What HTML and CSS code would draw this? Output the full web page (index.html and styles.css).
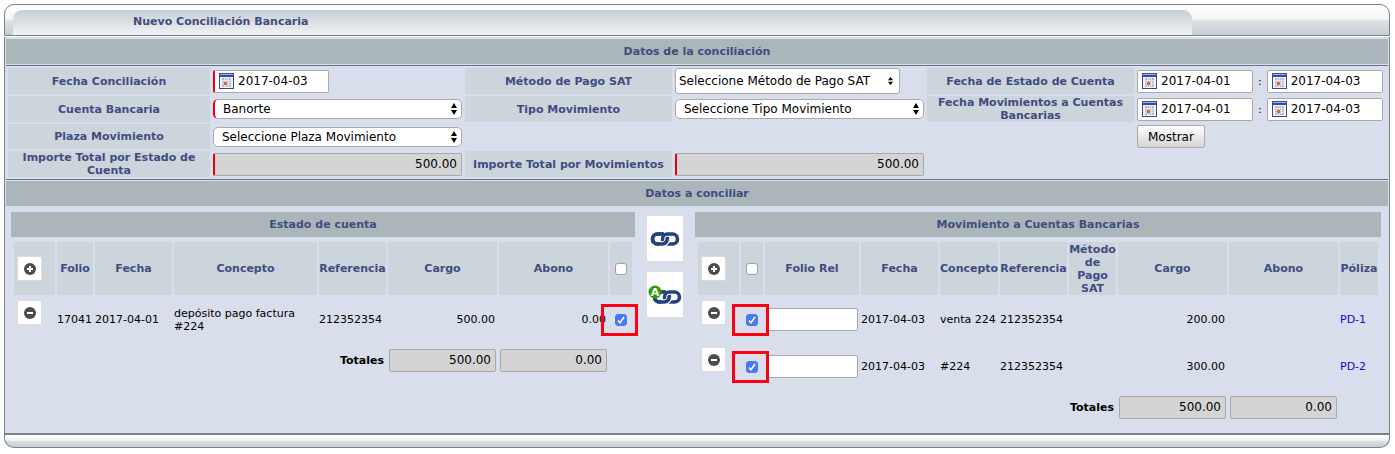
FILE: index.html
```html
<!DOCTYPE html>
<html lang="es">
<head>
  <meta charset="UTF-8">
  <meta name="viewport" content="width=device-width, initial-scale=1.0">
  <title>Nuevo Conciliación Bancaria</title>
  <link rel="stylesheet" href="styles.css">
</head>

<body>

  <!-- Shared icons -->
  <svg class="sprite" aria-hidden="true">
    <symbol id="icon-calendar" viewBox="0 0 15 16">
      <rect x="0.5" y="0.5" width="14" height="15" fill="#f4f4f6" stroke="#38479b"/>
      <rect x="0" y="0" width="15" height="4" fill="#3448a4"/>
      <rect x="1" y="1" width="13" height="1" fill="#9db4ec"/>
      <rect x="3" y="5" width="9" height="9" fill="#b9b9bd"/>
      <path d="M3 7.5h9M3 9.5h9M3 11.5h9M5.5 5v9M7.5 5v9M9.5 5v9" stroke="#ececf0" stroke-width="0.8"/>
      <rect x="5" y="9" width="3" height="3" fill="#c8694a"/>
    </symbol>
    <symbol id="icon-plus" viewBox="0 0 12 12">
      <circle cx="6" cy="6" r="6" fill="#4d4d4d"/>
      <path d="M6 3v6M3 6h6" stroke="#fff" stroke-width="2"/>
    </symbol>
    <symbol id="icon-minus" viewBox="0 0 12 12">
      <circle cx="6" cy="6" r="6" fill="#4d4d4d"/>
      <path d="M3 6h6" stroke="#fff" stroke-width="2"/>
    </symbol>
    <symbol id="icon-link" viewBox="0 0 30 14">
      <g fill="none">
        <rect x="2.5" y="2" width="15" height="10" rx="5" stroke="#26427a" stroke-width="3.6"/>
        <rect x="12.500" y="2" width="15" height="10" rx="5" stroke="#fff" stroke-width="5.6"/>
        <path d="M14 2H7.500a5 5 0 0 0 0 10H10" stroke="#26427a" stroke-width="3.6"/>
        <rect x="12.500" y="2" width="15" height="10" rx="5" stroke="#26427a" stroke-width="3.6"/>
        <path d="M17.500 7a5 5 0 0 1-5 5H9" stroke="#fff" stroke-width="5.6"/>
        <path d="M17 5.500a5 5 0 0 1-4.500 6.500H7.500" stroke="#26427a" stroke-width="3.6"/>
      </g>
    </symbol>
  </svg>

  <div class="panel">
    <header class="panel-top">
      <h1 class="tab">Nuevo Conciliación Bancaria</h1>
    </header>

    <main class="panel-body">
      <h2 class="section-title">Datos de la conciliación</h2>

      <form class="form-grid">
        <label class="field-label" for="fechaConciliacion">Fecha Conciliación</label>
        <div class="field">
          <span class="date-box required"><svg class="calendar"><use href="#icon-calendar"/></svg><input type="text" id="fechaConciliacion" value="2017-04-03"></span>
        </div>
        <label class="field-label" for="metodoPago">Método de Pago SAT</label>
        <div class="field">
          <select class="select-small" id="metodoPago"><option>Seleccione Método de Pago SAT</option></select>
        </div>
        <label class="field-label" for="estadoDesde">Fecha de Estado de Cuenta</label>
        <div class="field range">
          <span class="date-box"><svg class="calendar"><use href="#icon-calendar"/></svg><input type="text" id="estadoDesde" value="2017-04-01"></span>
          <span>:</span>
          <span class="date-box"><svg class="calendar"><use href="#icon-calendar"/></svg><input type="text" aria-label="Fecha de Estado de Cuenta hasta" value="2017-04-03"></span>
        </div>

        <label class="field-label" for="cuentaBancaria">Cuenta Bancaria</label>
        <div class="field">
          <select class="select-wide required" id="cuentaBancaria"><option>Banorte</option></select>
        </div>
        <label class="field-label" for="tipoMovimiento">Tipo Movimiento</label>
        <div class="field">
          <select class="select-wide" id="tipoMovimiento"><option>Seleccione Tipo Movimiento</option></select>
        </div>
        <label class="field-label" for="movDesde">Fecha Movimientos a Cuentas Bancarias</label>
        <div class="field range">
          <span class="date-box"><svg class="calendar"><use href="#icon-calendar"/></svg><input type="text" id="movDesde" value="2017-04-01"></span>
          <span>:</span>
          <span class="date-box"><svg class="calendar"><use href="#icon-calendar"/></svg><input type="text" aria-label="Fecha Movimientos hasta" value="2017-04-03"></span>
        </div>

        <label class="field-label" for="plazaMovimiento">Plaza Movimiento</label>
        <div class="field">
          <select class="select-wide" id="plazaMovimiento"><option>Seleccione Plaza Movimiento</option></select>
        </div>
        <div class="field mostrar">
          <button type="button" class="btn">Mostrar</button>
        </div>

        <label class="field-label" for="totalEstado">Importe Total por Estado de Cuenta</label>
        <div class="field">
          <input type="text" class="amount required" id="totalEstado" value="500.00" readonly>
        </div>
        <label class="field-label" for="totalMovimientos">Importe Total por Movimientos</label>
        <div class="field">
          <input type="text" class="amount required" id="totalMovimientos" value="500.00" readonly>
        </div>
      </form>

      <h2 class="section-title">Datos a conciliar</h2>

      <div class="reconcile">
        <!-- Estado de cuenta -->
        <section>
          <h3 class="table-title">Estado de cuenta</h3>
          <table class="data-table">
            <colgroup>
              <col class="col-toggle"><col class="col-folio"><col class="col-fecha"><col class="col-concepto">
              <col class="col-referencia"><col class="col-importe"><col class="col-importe"><col class="col-check">
            </colgroup>
            <thead>
              <tr>
                <th class="toggle"><button type="button" class="icon-btn" aria-label="Agregar"><svg><use href="#icon-plus"/></svg></button></th>
                <th>Folio</th>
                <th>Fecha</th>
                <th>Concepto</th>
                <th>Referencia</th>
                <th>Cargo</th>
                <th>Abono</th>
                <th><input type="checkbox" aria-label="Seleccionar todo"></th>
              </tr>
            </thead>
            <tbody>
              <tr>
                <td class="toggle"><button type="button" class="icon-btn" aria-label="Quitar"><svg><use href="#icon-minus"/></svg></button></td>
                <td>17041</td>
                <td>2017-04-01</td>
                <td>depósito pago factura #224</td>
                <td>212352354</td>
                <td class="number">500.00</td>
                <td class="number">0.00</td>
                <td class="check"><span class="marked"><input type="checkbox" aria-label="Seleccionar 17041" checked></span></td>
              </tr>
            </tbody>
            <tfoot>
              <tr>
                <td colspan="5" class="total-label">Totales</td>
                <td class="total"><input type="text" class="amount" aria-label="Total cargo" value="500.00" readonly></td>
                <td class="total"><input type="text" class="amount" aria-label="Total abono" value="0.00" readonly></td>
                <td></td>
              </tr>
            </tfoot>
          </table>
        </section>

        <div class="link-buttons">
          <button type="button" class="link-btn" aria-label="Conciliar">
            <svg width="30" height="14"><use href="#icon-link"/></svg>
          </button>
          <button type="button" class="link-btn" aria-label="Conciliar automático">
            <svg width="34" height="20" viewBox="0 0 34 20">
              <svg x="4" y="5" width="30" height="14"><use href="#icon-link"/></svg>
              <circle cx="7" cy="7" r="6.5" fill="#349a0a"/>
              <text class="auto-letter" x="7" y="11" text-anchor="middle">A</text>
            </svg>
          </button>
        </div>

        <!-- Movimientos -->
        <section>
          <h3 class="table-title">Movimiento a Cuentas Bancarias</h3>
          <table class="data-table">
            <colgroup>
              <col class="col-toggle"><col class="col-check"><col class="col-rel"><col class="col-fecha"><col class="col-concepto-short">
              <col class="col-referencia"><col class="col-metodo"><col class="col-importe"><col class="col-importe"><col class="col-poliza">
            </colgroup>
            <thead>
              <tr>
                <th class="toggle"><button type="button" class="icon-btn" aria-label="Agregar"><svg><use href="#icon-plus"/></svg></button></th>
                <th><input type="checkbox" aria-label="Seleccionar todo"></th>
                <th>Folio Rel</th>
                <th>Fecha</th>
                <th>Concepto</th>
                <th>Referencia</th>
                <th>Método de Pago SAT</th>
                <th>Cargo</th>
                <th>Abono</th>
                <th>Póliza</th>
              </tr>
            </thead>
            <tbody>
              <tr>
                <td class="toggle"><button type="button" class="icon-btn" aria-label="Quitar"><svg><use href="#icon-minus"/></svg></button></td>
                <td class="check"><span class="marked"><input type="checkbox" aria-label="Seleccionar venta 224" checked></span></td>
                <td class="rel"><input type="text" class="text-box" aria-label="Folio Rel"></td>
                <td>2017-04-03</td>
                <td>venta 224</td>
                <td>212352354</td>
                <td></td>
                <td class="number">200.00</td>
                <td></td>
                <td><a href="#">PD-1</a></td>
              </tr>
              <tr>
                <td class="toggle"><button type="button" class="icon-btn" aria-label="Quitar"><svg><use href="#icon-minus"/></svg></button></td>
                <td class="check"><span class="marked"><input type="checkbox" aria-label="Seleccionar #224" checked></span></td>
                <td class="rel"><input type="text" class="text-box" aria-label="Folio Rel"></td>
                <td>2017-04-03</td>
                <td>#224</td>
                <td>212352354</td>
                <td></td>
                <td class="number">300.00</td>
                <td></td>
                <td><a href="#">PD-2</a></td>
              </tr>
            </tbody>
            <tfoot>
              <tr>
                <td colspan="7" class="total-label">Totales</td>
                <td class="total"><input type="text" class="amount" aria-label="Total cargo" value="500.00" readonly></td>
                <td class="total"><input type="text" class="amount" aria-label="Total abono" value="0.00" readonly></td>
                <td></td>
              </tr>
            </tfoot>
          </table>
        </section>
      </div>
    </main>

    <footer class="panel-bottom"></footer>
  </div>

</body>

</html>
```

FILE: styles.css
```css
/* General Styles */
*,
*::after {
  box-sizing: border-box;
}

body {
  margin: 4px 5px 0 4px;
  background-color: #fff;
  color: #000;
  font-family: Verdana, "DejaVu Sans", sans-serif;
  font-size: 11px;
  line-height: 13px;
}

h1,
h2,
h3 {
  margin: 0;
  font-size: 11px;
  color: #414c80;
}

input,
select,
button {
  margin: 0;
  font-family: inherit;
  font-size: 12px;
  color: #000;
}

a {
  color: #2200dd;
  text-decoration: none;
}

.sprite {
  display: none;
}

/* Panel */
.panel-top {
  height: 32px;
  padding: 5px 197px 0 8px;
  border: 1px solid #77828c;
  border-radius: 10px 10px 0 0;
  background: linear-gradient(#fff, #f3f4f5 48%, #dce1e5 52%, #c6ced6);
}

.tab {
  height: 25px;
  padding-left: 120px;
  border-radius: 9px 9px 0 0;
  background: linear-gradient(#c6ced6, #f1f2f3);
  line-height: 23px;
}

.panel-body {
  margin-top: 1px;
  padding: 2px 1px 0;
  border: 1px solid #77828c;
  border-top: none;
  background-color: #d8deeb;
}

.panel-bottom {
  height: 13px;
  border: 1px solid #77828c;
  border-top: none;
  border-radius: 0 0 10px 10px;
  background: linear-gradient(#fff, #eff1f2 45%, #d8dde1 55%, #c6ced6);
}

.section-title,
.table-title {
  background-color: #abb6bb;
  line-height: 25px;
  text-align: center;
}

/* Form */
.form-grid {
  display: grid;
  grid-template-columns: 202fr 249fr 207fr 249fr 207fr 249fr;
  grid-template-rows: 26px 26px 25px 26px;
  gap: 2px 3px;
  margin: 1px 0;
  padding: 2px;
  border-top: 1px solid #64748a;
  border-bottom: 1px solid #64748a;
}

.field-label {
  display: flex;
  align-items: center;
  justify-content: center;
  padding: 0 4px;
  background-color: #ccd4dc;
  color: #414c80;
  font-weight: bold;
  text-align: center;
}

.field {
  display: flex;
  align-items: center;
  min-width: 0;
}

.mostrar {
  grid-column: 6;
}

.range {
  gap: 5px;
}

.date-box {
  display: flex;
  align-items: center;
  gap: 4px;
  width: 116px;
  height: 23px;
  padding-left: 4px;
  border: 1px solid #a9a9a9;
  border-radius: 2px;
  background-color: #fff;
}

.date-box input {
  flex: 1;
  min-width: 0;
  padding: 0;
  border: none;
  background: none;
}

.calendar {
  width: 15px;
  height: 16px;
}

select {
  appearance: none;
  border: 1px solid #a9a9a9;
  background: #fff url("data:image/svg+xml,%3Csvg xmlns='http://www.w3.org/2000/svg' width='6' height='12'%3E%3Cpath d='M0 5L3 0l3 5zM0 7l3 5 3-5z'/%3E%3C/svg%3E") no-repeat right 4px center;
}

.select-wide {
  width: 100%;
  height: 20px;
  padding: 0 16px 0 8px;
  border-radius: 5px;
}

.select-small {
  width: 225px;
  height: 26px;
  padding: 0 16px 0 3px;
  border-radius: 3px;
  background-position: right 6px center;
  background-size: 5px 8px;
}

.required {
  border-left: 2px solid #e60010;
}

.amount,
.text-box {
  display: block;
  width: 100%;
  height: 23px;
  padding: 0 4px;
  border: 1px solid #a9a9a9;
  border-radius: 2px;
}

.amount {
  background-color: #d4d4d4;
  text-align: right;
}

.amount.required {
  border-left: 2px solid #e60010;
}

.btn {
  height: 23px;
  padding: 0 10px;
  border: 1px solid #a9a9a9;
  border-radius: 2px;
  background: linear-gradient(#fff, #d4d4d4);
}

/* Reconciliation area */
.reconcile {
  display: grid;
  grid-template-columns: 624fr 38px 686fr;
  gap: 11px;
  padding: 6px 8px 8px 6px;
  border-bottom: 1px solid #77828c;
  margin: 0 -1px;
}

.data-table {
  width: calc(100% - 2px);
  margin: 3px 1px 0;
  border-spacing: 2px;
  table-layout: fixed;
}

.data-table th,
.data-table td {
  padding: 0;
}

.data-table th {
  height: 53px;
  background-color: #ccd4dc;
  color: #414c80;
}

.data-table tbody td {
  height: 45px;
}

.data-table tfoot td {
  height: 32px;
}

.data-table .number {
  padding-right: 2px;
  text-align: right;
}

.data-table .toggle {
  padding-left: 3px;
  text-align: left;
}

.data-table tbody .toggle {
  padding-top: 3px;
  vertical-align: top;
}

.data-table .check {
  text-align: center;
}

.data-table .total,
.data-table .rel {
  padding: 0 1px;
}

.data-table .total-label {
  padding-right: 2px;
  font-weight: bold;
  text-align: right;
}

.col-toggle { width: 41px; }
.col-check { width: 22px; }
.col-folio { width: 36px; }
.col-fecha { width: 77px; }
.col-concepto { width: 143px; }
.col-concepto-short { width: 58px; }
.col-referencia { width: 67px; }
.col-metodo { width: 47px; }
.col-rel { width: 94px; }
.col-importe { width: 109px; }
.col-poliza { width: 38px; }

.icon-btn {
  display: flex;
  align-items: center;
  justify-content: center;
  width: 25px;
  height: 25px;
  padding: 0;
  border: 1px solid #dcdcdc;
  border-radius: 2px;
  background-color: #fff;
}

.icon-btn svg {
  width: 12px;
  height: 12px;
}

input[type="checkbox"] {
  appearance: none;
  display: block;
  width: 12px;
  height: 12px;
  margin: 0 auto;
  border: 1px solid #a0a0a0;
  border-radius: 3px;
  background-color: #fff;
}

input[type="checkbox"]:checked {
  border-color: #4a78f5;
  background: #4a78f5 url("data:image/svg+xml,%3Csvg xmlns='http://www.w3.org/2000/svg' width='10' height='10'%3E%3Cpath d='M2 5.5l2 2.300L8 2' fill='none' stroke='white' stroke-width='1.6'/%3E%3C/svg%3E") no-repeat center;
}

/* Red frame over the ticked boxes */
.marked {
  display: block;
  position: relative;
}

.marked::after {
  content: "";
  position: absolute;
  top: -10px;
  left: -9px;
  width: 37px;
  height: 32px;
  border: 3px solid #ff0010;
  pointer-events: none;
}

.link-buttons {
  display: flex;
  flex-direction: column;
  gap: 9px;
  padding-top: 3px;
}

.link-btn {
  display: flex;
  align-items: center;
  justify-content: center;
  height: 47px;
  padding: 0;
  border: 1px solid #dcdcdc;
  border-radius: 2px;
  background-color: #fff;
}

.auto-letter {
  fill: #fff;
  font-size: 11px;
  font-weight: bold;
}
```
